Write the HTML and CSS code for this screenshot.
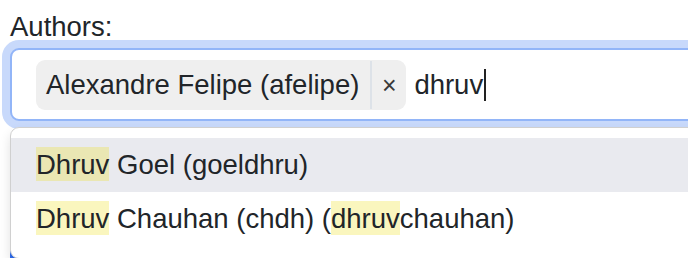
FILE: index.html
```html
<!DOCTYPE html>
<html>
<head>
<meta charset="utf-8">
<link rel="stylesheet" href="styles.css">
</head>
<body>
<div class="page">
  <label class="label">Authors:</label>
  <div class="field">
    <div class="control">
      <div class="chip">
        <span class="chip-text">Alexandre Felipe (afelipe)</span>
        <span class="chip-remove">×</span>
      </div>
      <span class="typed">dhruv</span><span class="caret"></span>
    </div>
    <div class="dropdown">
      <div class="option active"><span class="hl">Dhruv</span> Goel (goeldhru)</div>
      <div class="option"><span class="hl">Dhruv</span> Chauhan (chdh) (<span class="hl">dhruv</span>chauhan)</div>
    </div>
  </div>
  <div class="button"></div>
</div>
</body>
</html>
```
FILE: styles.css
```css
html, body {
  margin: 0;
  padding: 0;
  background: #ffffff;
  overflow: hidden;
}
body {
  font-family: "Liberation Sans", Arial, sans-serif;
  font-size: 27.5px;
  color: #212529;
}
.page {
  padding: 10px 0 0 10px;
  width: 760px;
}
.label {
  display: block;
  line-height: 34px;
  height: 34px;
}
.field {
  position: relative;
  margin-top: 4px;
}
.control {
  box-sizing: border-box;
  height: 73px;
  width: 740px;
  border: 2px solid #92b5f8;
  border-radius: 9px;
  box-shadow: 0 0 0 8px #c8d9fb;
  display: flex;
  align-items: center;
  padding-left: 24px;
  background: #fff;
}
.chip {
  display: flex;
  align-items: center;
  height: 50px;
  background: #efefef;
  border-radius: 9px;
  padding-left: 10px;
  line-height: 50px;
}
.chip-text {
  padding-right: 11px;
}
.chip-remove {
  box-sizing: border-box;
  width: 36px;
  height: 48px;
  border-left: 2px solid #dde2e8;
  text-align: center;
  line-height: 48px;
  font-size: 25px;
  color: #3a3a3a;
}
.typed {
  margin-left: 8px;
  line-height: 36px;
}
.caret {
  display: inline-block;
  width: 2px;
  height: 32px;
  background: #222;
  margin-left: 1px;
}
.dropdown {
  position: absolute;
  top: calc(100% + 6px);
  left: 0;
  width: 740px;
  box-sizing: border-box;
  border: 1px solid #d0d0d0;
  border-radius: 9px;
  background: #fff;
  padding: 10px 0 12px;
  box-shadow: 0 6px 12px rgba(0, 0, 0, 0.12);
  z-index: 2;
}
.option {
  height: 54px;
  line-height: 54px;
  padding-left: 25px;
  white-space: nowrap;
}
.option.active {
  background: #e9eaef;
}
.hl {
  background: rgba(240, 225, 40, 0.3);
  padding: 2px 0 1px;
}
.button {
  margin-top: 114px;
  width: 120px;
  height: 60px;
  background: #2f6df0;
  border-radius: 9px;
}
```
